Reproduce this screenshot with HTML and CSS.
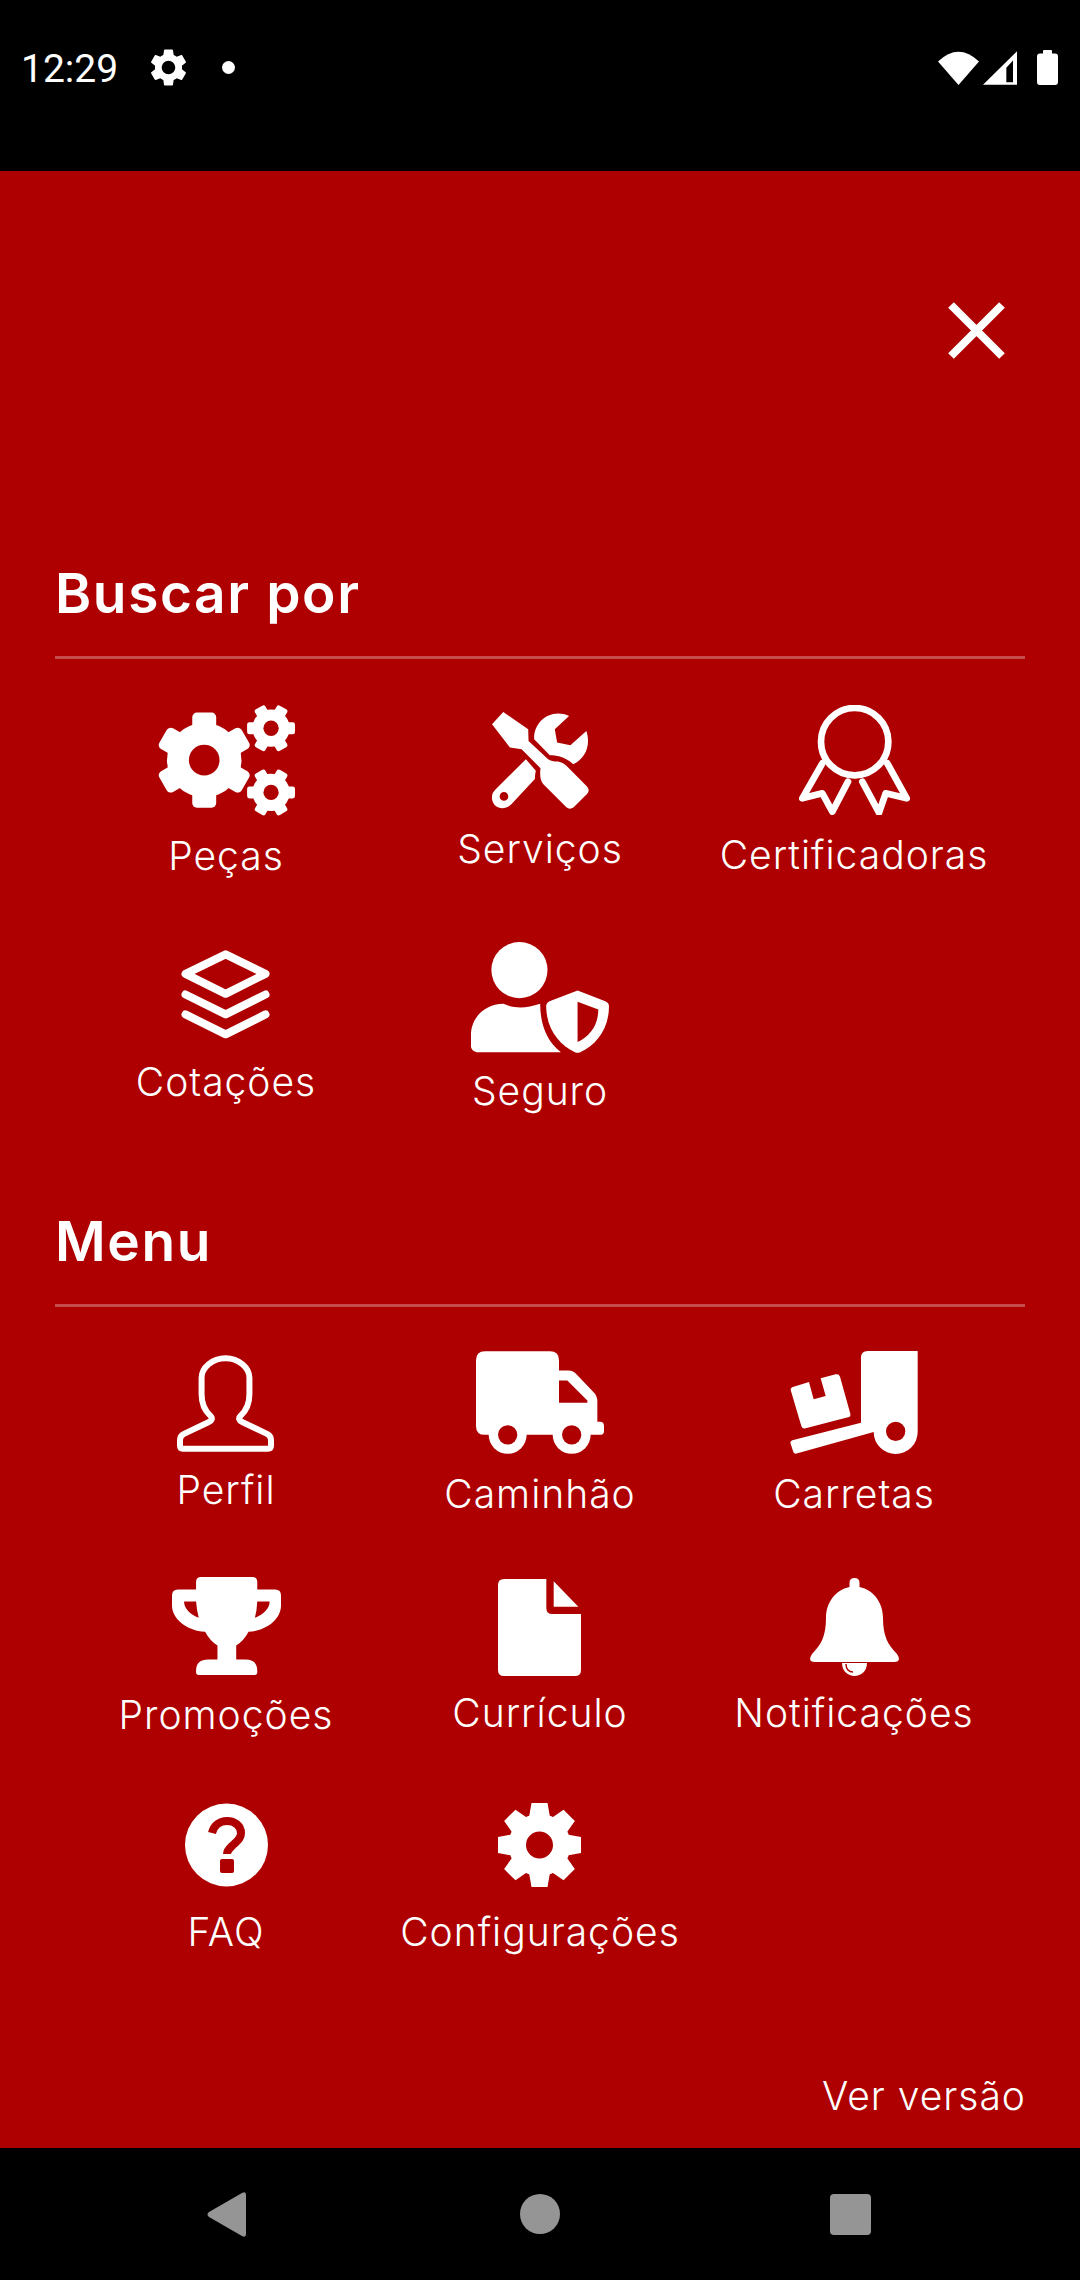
FILE: index.html
```html
<!DOCTYPE html>
<html lang="pt-BR">
  <head>
    <meta charset="UTF-8" />
    <meta name="viewport" content="width=device-width, initial-scale=1.0" />
    <title>Menu</title>
    <link rel="stylesheet" href="styles.css">
  </head>
  <body>
    <!-- Status bar -->
    <div class="status-bar">
      <div class="status-left">
        <span class="clock">12:29</span>
        <svg class="status-gear" viewBox="0 0 24 24"><path d="M19.14 12.94c.04-.3.06-.61.06-.94 0-.32-.02-.64-.07-.94l2.03-1.58c.18-.14.23-.41.12-.61l-1.92-3.32c-.12-.22-.37-.29-.59-.22l-2.39.96c-.5-.38-1.03-.7-1.62-.94l-.36-2.54c-.04-.24-.24-.41-.48-.41h-3.84c-.24 0-.43.17-.47.41l-.36 2.54c-.59.24-1.13.57-1.62.94l-2.39-.96c-.22-.08-.47 0-.59.22L2.74 8.87c-.12.21-.08.47.12.61l2.03 1.58c-.05.3-.09.63-.09.94s.02.64.07.94l-2.03 1.58c-.18.14-.23.41-.12.61l1.92 3.32c.12.22.37.29.59.22l2.39-.96c.5.38 1.03.7 1.62.94l.36 2.54c.05.24.24.41.48.41h3.84c.24 0 .44-.17.47-.41l.36-2.54c.59-.24 1.13-.56 1.62-.94l2.39.96c.22.08.47 0 .59-.22l1.92-3.32c.12-.22.07-.47-.12-.61l-2.01-1.58zM12 15.6c-1.98 0-3.6-1.62-3.6-3.6s1.62-3.6 3.6-3.6 3.6 1.62 3.6 3.6-1.62 3.6-3.6 3.6z"/></svg>
        <span class="status-dot"></span>
      </div>
      <div class="status-right">
        <svg class="status-wifi" viewBox="55 47 122 101"><path d="M55 78Q116 20 177 78L116 148Z"/></svg>
        <svg class="status-signal" viewBox="188 47 102 101"><path fill-rule="evenodd" d="M290 47V148H188ZM278 75L258 97V140H278Z"/></svg>
        <svg class="status-battery" viewBox="0 0 21 35"><path d="M6 3.500V1Q6 0 7 0H14Q15 0 15 1V3.500H18Q21 3.500 21 6.500V32Q21 35 18 35H3Q0 35 0 32V6.500Q0 3.500 3 3.500Z"/></svg>
      </div>
    </div>

    <div class="menu">
      <div class="close-row">
        <svg class="close-icon" viewBox="0 0 57 57"><path d="M3 3L54 54M54 3L3 54"/></svg>
      </div>

      <!-- Buscar por -->
      <h2 class="section-title">Buscar por</h2>
      <div class="rule"></div>
      <div class="grid grid-busca">
        <div class="item">
          <svg class="ico ico-pecas" viewBox="24 28 412 332">
            <g transform="translate(163 193)">
              <circle r="112"/>
              <rect x="-36" y="-143" width="72" height="286" rx="14"/>
              <rect x="-36" y="-143" width="72" height="286" rx="14" transform="rotate(60)"/>
              <rect x="-36" y="-143" width="72" height="286" rx="14" transform="rotate(120)"/>
              <circle class="cut" r="46"/>
            </g>
            <g transform="translate(364 97)">
              <circle r="56"/>
              <rect x="-18" y="-72" width="36" height="144" rx="7" transform="rotate(30)"/>
              <rect x="-18" y="-72" width="36" height="144" rx="7" transform="rotate(90)"/>
              <rect x="-18" y="-72" width="36" height="144" rx="7" transform="rotate(150)"/>
              <circle class="cut" r="23"/>
            </g>
            <g transform="translate(364 290)">
              <circle r="56"/>
              <rect x="-18" y="-72" width="36" height="144" rx="7" transform="rotate(30)"/>
              <rect x="-18" y="-72" width="36" height="144" rx="7" transform="rotate(90)"/>
              <rect x="-18" y="-72" width="36" height="144" rx="7" transform="rotate(150)"/>
              <circle class="cut" r="23"/>
            </g>
          </svg>
          <span class="label">Peças</span>
        </div>
        <div class="item">
          <svg class="ico ico-servicos" viewBox="1026 48 292 292">
            <path d="M1060 48L1135 100L1136 135L1195 190Q1205 197 1225 197Q1240 200 1250 210L1312 272Q1322 284 1312 295L1272 335Q1260 344 1250 335L1180 265Q1168 250 1172 217L1115 160L1080 155L1026 85Z"/>
            <path d="M1258 60L1215 100L1222 140L1262 148L1310 105C1325 150 1305 190 1270 205C1250 185 1225 178 1200 178L1153 130C1150 80 1200 35 1258 60Z"/>
            <path fill-rule="evenodd" d="M1128 190L1158 225Q1155 235 1155 250L1085 325C1060 350 1022 335 1026 300Q1028 290 1035 283ZM1062 289A13 13 0 1 0 1062 315A13 13 0 1 0 1062 289Z"/>
          </svg>
          <span class="label">Serviços</span>
        </div>
        <div class="item">
          <svg class="ico ico-cert line" viewBox="85 15 333 330">
            <circle cx="252" cy="125" r="101"/>
            <path d="M155 190L95 295L155 280L185 335L232 245"/>
            <path d="M350 190L408 295L345 280L325 338L275 245"/>
          </svg>
          <span class="label">Certificadoras</span>
        </div>
        <div class="item">
          <svg class="ico ico-cotacoes line" viewBox="36 48 267 268">
            <path d="M170 61L290 120L170 180L49 120Z"/>
            <path d="M49 182L170 242L290 182"/>
            <path d="M49 242L170 302L290 242"/>
          </svg>
          <span class="label">Cotações</span>
        </div>
        <div class="item">
          <svg class="ico ico-seguro" viewBox="903 13 413 332">
            <circle cx="1048" cy="97" r="84"/>
            <path d="M903 325V290C903 240 945 198 1000 198C1040 215 1070 210 1110 198C1110 260 1130 310 1172 343H925C912 343 903 335 903 325Z"/>
            <path d="M1222 158L1305 190Q1316 195 1316 205C1316 270 1280 320 1230 343Q1222 346 1214 343C1165 320 1128 270 1128 205Q1128 195 1138 190Z"/>
            <path class="cut" d="M1222 192L1284 215C1284 260 1260 295 1222 312Z"/>
          </svg>
          <span class="label">Seguro</span>
        </div>
      </div>

      <!-- Menu -->
      <h2 class="section-title section-menu">Menu</h2>
      <div class="rule"></div>
      <div class="grid grid-menu">
        <div class="item">
          <svg class="ico ico-perfil line" viewBox="24 27 292 291">
            <path d="M170 36C130 36 98 65 98 95V145C98 170 108 195 125 210Q135 220 120 228L45 264Q33 270 33 282V300Q33 309 42 309H298Q307 309 307 300V282Q307 270 295 264L220 228Q205 220 215 210C232 195 242 170 242 145V95C242 65 210 36 170 36Z"/>
          </svg>
          <span class="label">Perfil</span>
        </div>
        <div class="item">
          <svg class="ico ico-caminhao" viewBox="918 15 384 308">
            <path d="M945 15H1140Q1167 15 1167 42V73H1195Q1210 73 1220 85L1268 135Q1282 148 1282 165V227H1290Q1302 227 1302 240V255Q1302 266 1290 266H945Q918 266 918 240V42Q918 15 945 15Z"/>
            <circle cx="1013" cy="266" r="57"/>
            <circle cx="1205" cy="266" r="57"/>
            <circle class="cut" cx="1013" cy="266" r="29"/>
            <circle class="cut" cx="1205" cy="266" r="29"/>
            <path class="cut" d="M1167 103H1192L1252 163V170H1167Z"/>
          </svg>
          <span class="label">Caminhão</span>
        </div>
        <div class="item">
          <svg class="ico ico-carretas" viewBox="62 15 382 309">
            <path fill-rule="evenodd" d="M274 35Q274 15 294 15H444V258A66 66 0 0 1 312 258L78 323Q72 323 70 315L62 290Q62 285 68 283L274 230ZM378 227A29 29 0 1 0 378 285A29 29 0 1 0 378 227Z"/>
            <path d="M72 122L118 108L132 160L168 150L153 97L198 85Q208 83 211 92L242 203Q244 212 235 214L108 247Q98 250 95 240L63 132Q62 125 72 122Z"/>
          </svg>
          <span class="label">Carretas</span>
        </div>
        <div class="item">
          <svg class="ico ico-promocoes" viewBox="36 20 326 293">
            <path fill-rule="evenodd" d="M108 35Q108 20 123 20H276Q291 20 291 35V57H345Q362 57 362 75V105C362 145 320 180 265 184Q250 212 228 225V267H255Q291 267 291 300V305Q291 313 283 313H116Q108 313 108 305V300Q108 267 145 267H172V225Q150 212 135 184C80 180 36 145 36 105V75Q36 57 54 57H108ZM72 93H108Q110 120 116 142C92 133 72 115 72 93ZM328 93H291Q290 120 284 142C308 133 328 115 328 93Z"/>
          </svg>
          <span class="label">Promoções</span>
        </div>
        <div class="item">
          <svg class="ico ico-curriculo" viewBox="1017 23 249 291">
            <path d="M1035 23H1162V110Q1162 128 1180 128H1266V296Q1266 314 1248 314H1035Q1017 314 1017 296V41Q1017 23 1035 23Z"/>
            <path d="M1184 30L1258 106H1184Z"/>
          </svg>
          <span class="label">Currículo</span>
        </div>
        <div class="item">
          <svg class="ico ico-notificacoes" viewBox="0 0 91 98">
            <path d="M45.500 0Q50.500 0 50.500 5V9C65 12 74 25 74 40C74 58 79 67 88 76Q93 84 85 84H6Q-2 84 3 76C12 67 17 58 17 40C17 25 26 12 40.500 9V5Q40.500 0 45.500 0Z"/>
            <path d="M33 85H58C58 93 52 98 45.500 98C39 98 33 93 33 85Z"/>
            <path class="cut-line" d="M37 86C37 91 40 94 44 94"/>
          </svg>
          <span class="label">Notificações</span>
        </div>
        <div class="item">
          <svg class="ico ico-faq" viewBox="0 0 83 84">
            <circle cx="41.500" cy="42" r="41.500"/>
            <path class="cut-line thick" d="M27 30C29 22 35 18 42 18C50 18 56 23 56 30C56 36 52 38 48 42C45 45 42 47 42 51"/>
            <rect class="cut" x="35" y="56" width="14" height="14" rx="2"/>
          </svg>
          <span class="label">FAQ</span>
        </div>
        <div class="item">
          <svg class="ico ico-config" viewBox="0 0 83 84">
            <g transform="translate(41.500 42)">
              <circle r="31"/>
              <polygon points="-8,-42 8,-42 11,-25 11,25 8,42 -8,42 -11,25 -11,-25"/>
              <polygon points="-8,-42 8,-42 11,-25 11,25 8,42 -8,42 -11,25 -11,-25" transform="rotate(45)"/>
              <polygon points="-8,-42 8,-42 11,-25 11,25 8,42 -8,42 -11,25 -11,-25" transform="rotate(90)"/>
              <polygon points="-8,-42 8,-42 11,-25 11,25 8,42 -8,42 -11,25 -11,-25" transform="rotate(135)"/>
              <circle class="cut" r="13.500"/>
            </g>
          </svg>
          <span class="label">Configurações</span>
        </div>
      </div>

      <div class="version">Ver versão</div>
    </div>

    <!-- Navigation bar -->
    <div class="nav-bar">
      <svg class="nav-back" viewBox="0 0 39 45"><path d="M35 1Q39 -1 39 3V42Q39 46 35 44L2 25Q-1 22.500 2 20Z"/></svg>
      <span class="nav-home"></span>
      <span class="nav-recent"></span>
    </div>
  </body>
</html>
```

FILE: styles.css
```css
* {
  box-sizing: border-box;
}

body {
  margin: 0;
  width: 1080px;
  height: 2280px;
  background-color: #000;
  color: #fff;
  font-family: "Inter", "Liberation Sans", sans-serif;
  overflow: hidden;
}

svg {
  display: block;
  fill: #fff;
}

/* Status bar */
.status-bar {
  display: flex;
  justify-content: space-between;
  height: 171px;
  padding: 45px 22px 0 21px;
}

.status-left,
.status-right {
  display: flex;
  align-items: center;
  height: 45px;
}

.clock {
  margin-top: 4px;
  font-family: "Roboto", sans-serif;
  font-size: 39px;
  line-height: 45px;
  width: 96px;
  white-space: nowrap;
}

.status-gear {
  width: 45px;
  height: 45px;
  margin-left: 29px;
}

.status-dot {
  width: 13px;
  height: 13px;
  margin-left: 31px;
  border-radius: 50%;
  background-color: #fff;
}

.status-wifi {
  width: 41px;
  height: 34px;
}

.status-signal {
  width: 34px;
  height: 34px;
  margin-left: 4px;
}

.status-battery {
  width: 21px;
  height: 35px;
  margin-left: 20px;
}

/* Red menu */
.menu {
  height: 1977px;
  padding: 0 55px;
  background-color: #ae0000;
}

.close-row {
  display: flex;
  justify-content: flex-end;
  padding: 131px 20px 0 0;
}

.close-icon {
  width: 57px;
  height: 57px;
}

.close-icon path {
  fill: none;
  stroke: #fff;
  stroke-width: 8;
}

.section-title {
  margin: 199px 0 0;
  font-size: 55px;
  font-weight: 600;
  line-height: 70px;
  letter-spacing: 1.6px;
}

.section-menu {
  margin-top: 60px;
}

.rule {
  height: 3px;
  margin-top: 28px;
  background-color: #c64d4d;
}

.grid {
  display: grid;
  grid-template-columns: repeat(3, 314px);
  margin: 15px 14px 0;
  align-items: center;
  justify-items: center;
}

.grid-busca {
  grid-template-rows: 236px 236px;
}

.grid-menu {
  grid-template-rows: 224px 223px 220px;
}

.item {
  display: flex;
  flex-direction: column;
  align-items: center;
}

.label,
.version {
  font-size: 39px;
  font-weight: 300;
  line-height: 48px;
  letter-spacing: 1px;
  white-space: nowrap;
}

.version {
  margin: 83px -1px 0 0;
  text-align: right;
}

/* Icons */
.cut {
  fill: #ae0000;
}

.cut-line {
  fill: none;
  stroke: #ae0000;
  stroke-width: 1.5;
}

.cut-line.thick {
  stroke-width: 8;
}

.line {
  fill: none;
  stroke: #fff;
  stroke-linecap: round;
  stroke-linejoin: round;
}

.ico {
  margin-bottom: 16px;
}

.ico-pecas {
  width: 137px;
  height: 111px;
}

.ico-servicos {
  width: 97px;
  height: 97px;
}

.ico-cert {
  width: 111px;
  height: 110px;
  stroke-width: 20;
}

.ico-cotacoes {
  width: 89px;
  height: 89px;
  margin-bottom: 19px;
  stroke-width: 24;
}

.ico-seguro {
  width: 138px;
  height: 111px;
  margin-bottom: 14px;
}

.ico-perfil {
  width: 97px;
  height: 97px;
  margin-bottom: 14px;
  stroke-width: 18;
}

.ico-caminhao,
.ico-carretas {
  width: 128px;
  height: 103px;
}

.ico-promocoes {
  width: 109px;
  height: 98px;
}

.ico-curriculo {
  width: 83px;
  height: 97px;
  margin-bottom: 13px;
}

.ico-notificacoes {
  width: 91px;
  height: 98px;
  margin-bottom: 13px;
}

.ico-faq,
.ico-config {
  width: 83px;
  height: 84px;
  margin-bottom: 21px;
}

/* Navigation bar */
.nav-bar {
  display: flex;
  align-items: center;
  height: 132px;
  padding-left: 207px;
}

.nav-back {
  width: 39px;
  height: 45px;
  fill: #959595;
}

.nav-home {
  width: 40px;
  height: 40px;
  margin-left: 274px;
  border-radius: 50%;
  background-color: #959595;
}

.nav-recent {
  width: 41px;
  height: 41px;
  margin-left: 270px;
  border-radius: 4px;
  background-color: #959595;
}
```
